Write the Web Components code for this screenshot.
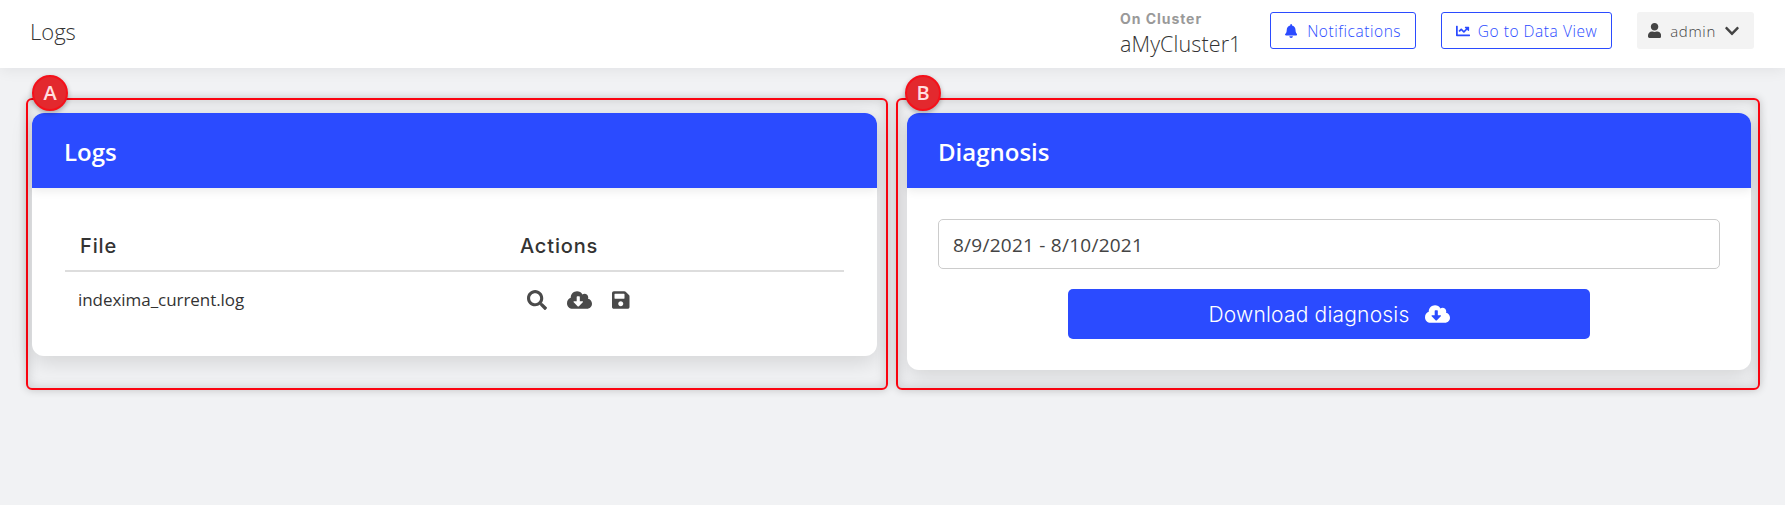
<!DOCTYPE html>
<html><head><meta charset="utf-8"><title>Logs</title>
<style>
html,body{margin:0;height:100%}
body{background:#f1f2f4;font-family:"Open Sans","Noto Sans",sans-serif;color:#333;overflow:hidden}
</style></head><body>
<app-shell>
  <app-topbar slot="top" title-text="Logs" cluster="aMyCluster1"></app-topbar>
  <annot-frame label="A" style="width:862px;--pl:4px;--pr:9px;--bl:4px">
    <panel-card heading="Logs"><log-table></log-table></panel-card>
  </annot-frame>
  <annot-frame label="B" style="width:864px;--pl:9px;--pr:7px;--bl:7px">
    <panel-card heading="Diagnosis" style="--hp:31px"><diag-form></diag-form></panel-card>
  </annot-frame>
</app-shell>
<script>
const P={
search:[512,512,"M505 442.7L405.3 343c-4.5-4.5-10.6-7-17-7H372c27.6-35.3 44-79.7 44-128C416 93.1 322.9 0 208 0S0 93.1 0 208s93.1 208 208 208c48.3 0 92.7-16.4 128-44v16.3c0 6.4 2.5 12.5 7 17l99.7 99.7c9.4 9.4 24.6 9.4 33.9 0l28.3-28.3c9.4-9.4 9.4-24.6.1-34zM208 336c-70.7 0-128-57.2-128-128 0-70.7 57.2-128 128-128 70.7 0 128 57.2 128 128 0 70.7-57.2 128-128 128z"],
cloud:[640,512,"M537.6 226.6c4.1-10.7 6.4-22.4 6.4-34.6 0-53-43-96-96-96-19.7 0-38.1 6-53.3 16.2C367 64.2 315.3 32 256 32c-88.4 0-160 71.6-160 160 0 2.7.1 5.4.2 8.1C40.2 219.8 0 273.2 0 336c0 79.5 64.5 144 144 144h368c70.7 0 128-57.3 128-128 0-61.9-44-113.6-102.4-125.4zm-132.9 88.7L299.3 420.7c-6.2 6.2-16.4 6.2-22.6 0L171.3 315.3c-10.1-10.1-2.9-27.3 11.3-27.3H248V176c0-8.8 7.2-16 16-16h48c8.8 0 16 7.2 16 16v112h65.4c14.2 0 21.4 17.2 11.3 27.3z"],
save:[448,512,"M433.941 129.941l-83.882-83.882A48 48 0 0 0 316.118 32H48C21.49 32 0 53.49 0 80v352c0 26.51 21.49 48 48 48h352c26.51 0 48-21.49 48-48V163.882a48 48 0 0 0-14.059-33.941zM224 416c-35.346 0-64-28.654-64-64 0-35.346 28.654-64 64-64s64 28.654 64 64c0 35.346-28.654 64-64 64zm96-304.52V212c0 6.627-5.373 12-12 12H76c-6.627 0-12-5.373-12-12V108c0-6.627 5.373-12 12-12h228.52c3.183 0 6.235 1.264 8.485 3.515l3.48 3.48A11.996 11.996 0 0 1 320 111.48z"],
bell:[448,512,"M224 512c35.32 0 63.97-28.65 63.97-64H160.03c0 35.35 28.65 64 63.97 64zm215.39-149.71c-19.32-20.76-55.47-51.99-55.47-154.29 0-77.7-54.48-139.9-127.94-155.16V32c0-17.67-14.32-32-31.98-32s-31.98 14.33-31.98 32v20.84C118.56 68.1 64.08 130.3 64.08 208c0 102.3-36.15 133.53-55.47 154.29-6 6.45-8.66 14.16-8.61 21.71.11 16.4 12.98 32 32.1 32h383.8c19.12 0 32-15.6 32.1-32 .05-7.55-2.61-15.27-8.61-21.71z"],
chart:[512,512,"M496 384H64V80c0-8.84-7.16-16-16-16H16C7.16 64 0 71.16 0 80v336c0 17.67 14.33 32 32 32h464c8.84 0 16-7.16 16-16v-32c0-8.84-7.16-16-16-16zM464 96H345.94c-21.38 0-32.09 25.85-16.97 40.97l32.4 32.4L288 242.75l-73.37-73.37c-12.5-12.5-32.76-12.5-45.25 0l-68.69 68.69c-6.25 6.25-6.25 16.38 0 22.63l22.62 22.62c6.25 6.25 16.38 6.25 22.63 0L192 237.25l73.37 73.37c12.5 12.5 32.76 12.5 45.25 0l96-96 32.4 32.4c15.12 15.12 40.97 4.41 40.97-16.97V112c.01-8.84-7.15-16-15.99-16z"],
user:[448,512,"M224 256c70.7 0 128-57.3 128-128S294.7 0 224 0 96 57.3 96 128s57.3 128 128 128zm89.6 32h-16.7c-22.2 10.2-46.9 16-72.9 16s-50.6-5.8-72.9-16h-16.7C60.2 288 0 348.2 0 422.4V464c0 26.5 21.5 48 48 48h352c26.5 0 48-21.5 48-48v-41.6c0-74.2-60.2-134.4-134.4-134.4z"],
chevron:[448,512,"M207.029 381.476L12.686 187.132c-9.373-9.373-9.373-24.569 0-33.941l22.667-22.667c9.357-9.357 24.522-9.375 33.901-.04L224 284.505l154.745-154.021c9.379-9.335 24.544-9.317 33.901.04l22.667 22.667c9.373 9.373 9.373 24.569 0 33.941L240.971 381.476c-9.373 9.372-24.569 9.372-33.942 0z"]
};
class FaIcon extends HTMLElement{
  connectedCallback(){
    if(this.shadowRoot)return;
    const [w,h,d]=P[this.getAttribute('name')];
    const s=+this.getAttribute('size')||16;
    this.attachShadow({mode:'open'}).innerHTML=`<style>:host{display:inline-flex;flex:none;line-height:0}svg{display:block;fill:currentColor}</style><svg width="${(s*w/h).toFixed(2)}" height="${s}" viewBox="0 0 ${w} ${h}"><path d="${d}"/></svg>`;
  }
}
customElements.define('fa-icon',FaIcon);

class AppShell extends HTMLElement{constructor(){super();this.attachShadow({mode:'open'}).innerHTML=`<style>
:host{display:flex;flex-direction:column;height:505px}
main{display:flex;gap:8px;padding:30px 0 0 26px;align-items:flex-start}
</style><slot name="top"></slot><main><slot></slot></main>`;}}
customElements.define('app-shell',AppShell);

class OutlineBtn extends HTMLElement{constructor(){super();this.attachShadow({mode:'open'}).innerHTML=`<style>
:host{display:inline-flex;align-items:center;justify-content:center;gap:8px;box-sizing:border-box;height:37px;border:1px solid #2b4bff;border-radius:3px;color:#2b4bff;background:#fff;font:300 15.5px "Open Sans",sans-serif;white-space:nowrap;letter-spacing:.55px}
</style><slot></slot>`;}}
customElements.define('outline-btn',OutlineBtn);

class UserMenu extends HTMLElement{constructor(){super();this.attachShadow({mode:'open'}).innerHTML=`<style>
:host{display:flex;align-items:center;box-sizing:border-box;width:117px;height:37px;padding-left:11px;gap:9px;background:#f3f3f3;border-radius:3px;color:#444;font:300 15px "Open Sans",sans-serif;letter-spacing:.7px}
</style><fa-icon name="user" size="15"></fa-icon><span>admin</span><fa-icon name="chevron" size="16"></fa-icon>`;}}
customElements.define('user-menu',UserMenu);

class AppTopbar extends HTMLElement{constructor(){super();this.attachShadow({mode:'open'}).innerHTML=`<style>
:host{display:flex;align-items:center;height:68px;box-sizing:border-box;padding:0 31px 7px 30px;background:#fff;box-shadow:0 2px 14px rgba(0,0,30,.07);position:relative;z-index:1;flex:none}
.t{font:300 22px "Open Sans",sans-serif;color:#333;flex:1}
.c{display:flex;flex-direction:column;width:150px;margin-top:7px}
.l{font:700 14px/16px "Inter",sans-serif;color:#999;letter-spacing:.95px}
.n{font:300 21.5px/26px "Open Sans",sans-serif;color:#333;margin-top:4px;letter-spacing:.1px}
.b{display:flex;align-items:center;gap:25px}
.d1{width:146px;gap:10px}.d2{width:171px;gap:8px}
</style><div class="t"></div><div class="c"><div class="l">On Cluster</div><div class="n"></div></div>
<div class="b"><outline-btn class="d1"><fa-icon name="bell" size="14"></fa-icon>Notifications</outline-btn><outline-btn class="d2"><fa-icon name="chart" size="14"></fa-icon>Go to Data View</outline-btn><user-menu></user-menu></div>`;}
connectedCallback(){this.shadowRoot.querySelector('.t').textContent=this.getAttribute('title-text');this.shadowRoot.querySelector('.n').textContent=this.getAttribute('cluster');}}
customElements.define('app-topbar',AppTopbar);

class AnnotFrame extends HTMLElement{constructor(){super();this.attachShadow({mode:'open'}).innerHTML=`<style>
:host{display:block;position:relative;box-sizing:border-box;height:292px;padding:13px var(--pr) 0 var(--pl);border:2px solid #fb0410;border-radius:6px;box-shadow:0 0 8px rgba(0,0,0,.2),inset 0 0 12px rgba(0,0,0,.17)}
.b{position:absolute;left:var(--bl);top:-25px;width:36px;height:36px;box-sizing:border-box;border-radius:50%;background:#e3292e;border:2px solid #f5101a;box-shadow:0 2px 5px rgba(0,0,0,.3);color:#ffdfe0;font:600 20px/32px "Open Sans",sans-serif;text-align:center;z-index:2}
</style><div class="b"></div><slot></slot>`;}
connectedCallback(){this.shadowRoot.querySelector('.b').textContent=this.getAttribute('label');}}
customElements.define('annot-frame',AnnotFrame);

class PanelCard extends HTMLElement{constructor(){super();this.attachShadow({mode:'open'}).innerHTML=`<style>
:host{display:block;background:#fff;border-radius:12px;box-shadow:0 6px 22px rgba(0,0,0,.13)}
header{height:75px;box-sizing:border-box;background:#2b4bff;border-radius:12px 12px 0 0;display:flex;align-items:center;padding:2px 0 0 var(--hp,32px);color:#fff;font:600 24px "Open Sans",sans-serif;box-shadow:0 3px 10px rgba(0,0,0,.08)}
</style><header></header><slot></slot>`;}
connectedCallback(){this.shadowRoot.querySelector('header').textContent=this.getAttribute('heading');}}
customElements.define('panel-card',PanelCard);

class LogTable extends HTMLElement{constructor(){super();this.attachShadow({mode:'open'}).innerHTML=`<style>
:host{display:block;padding:30px 33px 0 33px;height:168px;box-sizing:border-box}
.h{display:grid;grid-template-columns:455px 1fr;height:54px;border-bottom:2px solid #ddd;box-sizing:border-box;font:500 20px/56px "Inter",sans-serif;color:#333;letter-spacing:.85px}
.h span:first-child{padding-left:15px}
.r{display:grid;grid-template-columns:462px 1fr;align-items:center;height:55px}
.f{padding-left:13px;font:400 17px "Open Sans",sans-serif;color:#333;letter-spacing:-.05px}
.a{display:flex;align-items:center;gap:20px;color:#4a4a4a}
</style><div class="h"><span>File</span><span>Actions</span></div>
<div class="r"><div class="f">indexima_current.log</div><div class="a"><fa-icon name="search" size="20"></fa-icon><fa-icon name="cloud" size="20"></fa-icon><fa-icon name="save" size="20"></fa-icon></div></div>`;}}
customElements.define('log-table',LogTable);

class DiagForm extends HTMLElement{constructor(){super();this.attachShadow({mode:'open'}).innerHTML=`<style>
:host{display:block;height:182px;box-sizing:border-box;padding:31px 31px 0}
.i{box-sizing:border-box;height:50px;border:1px solid #ccc;border-radius:5px;display:flex;align-items:center;padding:1px 0 0 14px;font:400 19px "Open Sans",sans-serif;color:#444;letter-spacing:.25px}
.b{margin:20px auto 0;width:522px;height:50px;background:#2b4bff;border-radius:5px;color:#fff;display:flex;align-items:center;justify-content:center;gap:15px;font:300 21px "Inter",sans-serif;letter-spacing:.2px}
</style><div class="i">8/9/2021 - 8/10/2021</div><div class="b">Download diagnosis<fa-icon name="cloud" size="20"></fa-icon></div>`;}}
customElements.define('diag-form',DiagForm);
</script>
</body></html>
